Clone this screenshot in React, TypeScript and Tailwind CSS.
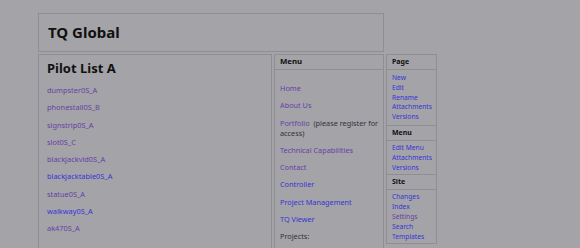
import React from 'react';

const pilots = [
  { name: 'dumpster0S_A', visited: true },
  { name: 'phonestall0S_B', visited: true },
  { name: 'signstrip0S_A', visited: true },
  { name: 'slot0S_C', visited: true },
  { name: 'blackjackvid0S_A', visited: true },
  { name: 'blackjacktable0S_A', visited: false },
  { name: 'statue0S_A', visited: true },
  { name: 'walkway0S_A', visited: false },
  { name: 'ak470S_A', visited: true },
];

const menu = [
  { name: 'Home', visited: true },
  { name: 'About Us', visited: true },
  { name: 'Portfolio', visited: true, note: '(please register for access)' },
  { name: 'Technical Capabilities', visited: true },
  { name: 'Contact', visited: true },
  { name: 'Controller', visited: false },
  { name: 'Project Management', visited: false },
  { name: 'TQ Viewer', visited: false },
];

const sideSections = [
  { title: 'Page', links: [['New'], ['Edit'], ['Rename'], ['Attachments'], ['Versions']] },
  { title: 'Menu', links: [['Edit Menu'], ['Attachments'], ['Versions']] },
  { title: 'Site', links: [['Changes'], ['Index'], ['Settings', 'v'], ['Search'], ['Templates']] },
];

const linkCls = (visited: boolean) => (visited ? 'text-[#6641a6]' : 'text-[#3535d6]');

export default function App() {
  return (
    <div className="w-[580px] h-[248px] overflow-hidden bg-[#a4a3a8] pl-[38px] pt-[13px] font-['Noto_Sans',sans-serif]">
      {/* Header */}
      <div className="w-[346px] h-[39px] border border-[#8f8e93] flex items-center pl-[9px]">
        <h1 className="text-[15px] font-bold text-[#111] leading-none">TQ Global</h1>
      </div>

      <div className="flex gap-[2px] mt-[2px]">
        {/* Main content */}
        <div className="w-[234px] h-[200px] border border-b-0 border-[#8f8e93] pl-[8px] pt-[5px]">
          <h2 className="text-[13px] font-bold text-[#111] leading-[16px]">Pilot List A</h2>
          <div className="flex flex-col gap-[7.3px] mt-[9px]">
            {pilots.map((p) => (
              <a key={p.name} className={`text-[7.4px] leading-[10px] ${linkCls(p.visited)}`}>{p.name}</a>
            ))}
          </div>
        </div>

        {/* Menu */}
        <div className="w-[110px] h-[200px] border border-b-0 border-[#8f8e93]">
          <div className="h-[15px] border-b border-[#8f8e93] pl-[5px] flex items-center text-[7.8px] font-bold text-[#111]">Menu</div>
          <div className="flex flex-col gap-[7.3px] pl-[5px] pr-[2px] pt-[13px]">
            {menu.map((m) => (
              <p key={m.name} className="text-[7.3px] leading-[10px] text-[#333]">
                <a className={linkCls(m.visited)}>{m.name}</a>
                {m.note && <>&nbsp;&nbsp;{m.note}</>}
              </p>
            ))}
            <p className="text-[7.3px] leading-[10px] text-[#333]">Projects:</p>
          </div>
        </div>

        {/* Side navigation */}
        <div className="w-[51px] h-[190px] border border-[#8f8e93]">
          {sideSections.map((s, i) => (
            <div key={s.title}>
              <div className={`${i === 0 ? 'h-[15px]' : 'h-[16px] border-t'} border-b border-[#8f8e93] pl-[5px] flex items-center text-[7px] font-bold text-[#111]`}>
                {s.title}
              </div>
              <div className={`flex flex-col pl-[5px] ${i === 0 ? 'py-[3px]' : 'py-[2px]'}`}>
                {s.links.map(([l, v]) => (
                  <a key={l} className={`text-[6.7px] leading-[9.8px] ${linkCls(v === 'v')}`}>{l}</a>
                ))}
              </div>
            </div>
          ))}
        </div>
      </div>
    </div>
  );
}
